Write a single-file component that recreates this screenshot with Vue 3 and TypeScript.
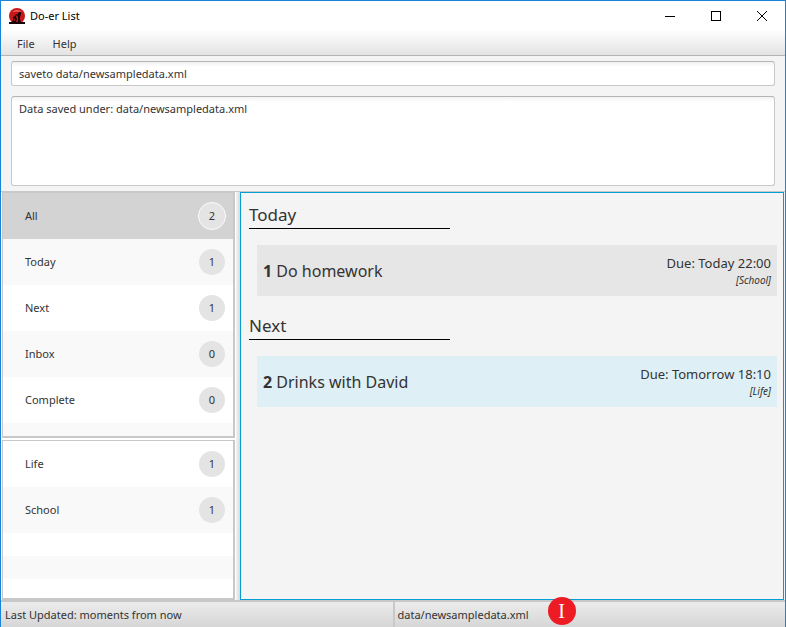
<script setup lang="ts">
import { ref } from 'vue'

interface Category {
  name: string
  count: number
}

interface Task {
  id: number
  title: string
  due: string
  tag: string
  upcoming: boolean
}

interface Section {
  title: string
  tasks: Task[]
}

const command = ref('saveto data/newsampledata.xml')
const result = ref('Data saved under: data/newsampledata.xml')
const selected = ref('All')

const builtIn: Category[] = [
  { name: 'All', count: 2 },
  { name: 'Today', count: 1 },
  { name: 'Next', count: 1 },
  { name: 'Inbox', count: 0 },
  { name: 'Complete', count: 0 },
]

const custom: Category[] = [
  { name: 'Life', count: 1 },
  { name: 'School', count: 1 },
]

const sections: Section[] = [
  {
    title: 'Today',
    tasks: [{ id: 1, title: 'Do homework', due: 'Due: Today 22:00', tag: '[School]', upcoming: false }],
  },
  {
    title: 'Next',
    tasks: [{ id: 2, title: 'Drinks with David', due: 'Due: Tomorrow 18:10', tag: '[Life]', upcoming: true }],
  },
]
</script>

<template>
  <div class="window">
    <header class="titlebar">
      <svg class="logo" viewBox="0 0 16 16" aria-hidden="true">
        <circle cx="8" cy="8" r="8" fill="#c9161b" />
        <path d="M3 4Q8 0 13 4Q8 3 3 4Z" fill="#ef6a62" />
        <path d="M0 14H3L4 12L4 9L6 8L7 6H8L7 9L8 11L7 14H9L9 9L8 7L10 4H12L12 6L11 9L11 12L12 14H16V16H0Z" fill="#170607" />
        <path d="M5 11L6 10V13H5Z" fill="#a31215" />
      </svg>
      <h1 class="title">Do-er List</h1>
      <div class="controls">
        <button type="button" aria-label="Minimize">
          <svg viewBox="0 0 10 10" shape-rendering="crispEdges"><path d="M0 5.5H10" /></svg>
        </button>
        <button type="button" aria-label="Maximize">
          <svg viewBox="0 0 10 10" shape-rendering="crispEdges"><path d="M.5 .5H9.5V9.5H.5Z" /></svg>
        </button>
        <button type="button" aria-label="Close">
          <svg viewBox="0 0 10 10"><path d="M0 0L10 10M10 0L0 10" /></svg>
        </button>
      </div>
    </header>

    <nav class="menubar">
      <button type="button">File</button>
      <button type="button">Help</button>
    </nav>

    <div class="console">
      <input v-model="command" class="field" type="text" aria-label="Command" />
      <textarea v-model="result" class="field result" readonly aria-label="Result"></textarea>
    </div>

    <div class="body">
      <aside class="sidebar">
        <ul class="list built-in">
          <li v-for="c in builtIn" :key="c.name">
            <button type="button" class="row" :class="{ selected: selected === c.name }" @click="selected = c.name">
              <span>{{ c.name }}</span>
              <span class="count">{{ c.count }}</span>
            </button>
          </li>
          <li class="filler partial"></li>
        </ul>
        <ul class="list custom">
          <li v-for="c in custom" :key="c.name">
            <button type="button" class="row" :class="{ selected: selected === c.name }" @click="selected = c.name">
              <span>{{ c.name }}</span>
              <span class="count">{{ c.count }}</span>
            </button>
          </li>
          <li class="filler"></li>
        </ul>
      </aside>

      <div class="divider"></div>

      <main class="tasks">
        <section v-for="s in sections" :key="s.title">
          <h2>{{ s.title }}</h2>
          <article v-for="t in s.tasks" :key="t.id" class="card" :class="{ upcoming: t.upcoming }">
            <p class="name"><b>{{ t.id }}</b> {{ t.title }}</p>
            <div class="meta">
              <span class="due">{{ t.due }}</span>
              <span class="tag">{{ t.tag }}</span>
            </div>
          </article>
        </section>
      </main>
    </div>

    <footer class="status">
      <span class="cell">Last Updated: moments from now</span>
      <span class="cell path">data/newsampledata.xml <b class="marker">I</b></span>
    </footer>
  </div>
</template>

<style>
body {
  margin: 0;
}
</style>

<style scoped>
* {
  box-sizing: border-box;
}

.window {
  display: flex;
  flex-direction: column;
  height: 100vh;
  border: 1px solid #1883d7;
  border-bottom: 0;
  background: #f4f4f4;
  color: #333;
  font: 11px/16px "Noto Sans", "Open Sans", sans-serif;
}

button {
  border: 0;
  padding: 0;
  background: none;
  color: inherit;
  font: inherit;
}

.titlebar {
  display: flex;
  align-items: center;
  flex: none;
  height: 30px;
  padding-left: 8px;
  background: #fff;
  color: #000;
}

.logo {
  width: 16px;
  height: 16px;
}

.title {
  margin: 0 auto 0 5px;
  font-size: 11px;
  font-weight: 400;
}

.controls {
  display: flex;
  height: 100%;
}

.controls button {
  display: grid;
  place-items: center;
  width: 46px;
}

.controls svg {
  width: 10px;
  height: 10px;
  fill: none;
  stroke: #000;
  stroke-width: 1;
}

.menubar {
  display: flex;
  flex: none;
  gap: 18px;
  height: 25px;
  padding: 2px 16px 0;
  border-bottom: 1px solid #b5b5b5;
  background: linear-gradient(#fdfdfd, #e3e3e3);
}

.console {
  display: flex;
  flex: none;
  flex-direction: column;
  gap: 10px;
  padding: 5px 10px;
}

.field {
  display: block;
  width: 100%;
  height: 25px;
  margin: 0;
  padding: 0 7px;
  border: 1px solid #c8c8c8;
  border-top-color: #b5b5b5;
  border-radius: 3px;
  outline: 0;
  background: linear-gradient(#f1f1f1, #fff 5px);
  color: #333;
  font: inherit;
}

.result {
  height: 90px;
  padding-top: 4px;
  resize: none;
}

.body {
  display: flex;
  flex: 1;
  min-height: 0;
  border-top: 1px solid #c8c8c8;
}

.sidebar {
  display: flex;
  flex-direction: column;
  flex: 0 0 235px;
  gap: 2px;
  padding: 0 1px;
  background: #fff;
}

.divider {
  flex: 0 0 4px;
  background: linear-gradient(90deg, #f4f4f4, #d9d9d9);
}

.list {
  display: flex;
  flex-direction: column;
  min-height: 0;
  margin: 0;
  padding: 0;
  overflow: hidden;
  border: solid #c8c8c8;
  border-width: 1px 2px 2px 1px;
  list-style: none;
}

.built-in {
  flex: none;
}

.custom {
  flex: 1;
}

.row {
  display: flex;
  align-items: center;
  justify-content: space-between;
  width: 100%;
  height: 46px;
  padding: 0 7px 0 22px;
  background: #fff;
}

li:nth-child(even) .row {
  background: #f9f9f9;
}

li .row.selected {
  background: #d3d3d3;
}

.count {
  width: 28px;
  border: 1px solid transparent;
  border-radius: 50%;
  background: #e4e4e4 padding-box;
  line-height: 26px;
  text-align: center;
}

.selected .count {
  border-color: #fff;
}

.filler {
  flex: 1;
  background: repeating-linear-gradient(#fff 0 23px, #f9f9f9 23px 46px);
}

.filler.partial {
  flex: 0 0 13px;
  background: #f9f9f9;
}

.tasks {
  flex: 1;
  min-width: 0;
  margin-right: 1px;
  padding: 10px 6px 0 8px;
  overflow: hidden;
  border: 1px solid #039ed3;
}

h2 {
  width: 201px;
  height: 26px;
  margin: 0 0 16px;
  border-bottom: 1px solid #000;
  font-size: 17px;
  font-weight: 400;
  line-height: 24px;
}

.card {
  display: flex;
  justify-content: space-between;
  height: 51px;
  margin: 0 0 18px 8px;
  padding: 0 6px;
  background: #e6e6e6;
}

.card.upcoming {
  background: #deeff5;
}

.name {
  margin: 0;
  font-size: 16px;
  line-height: 52px;
}

.meta {
  display: flex;
  flex-direction: column;
  padding-top: 9px;
  text-align: right;
}

.due {
  font-size: 13px;
  line-height: 18px;
}

.tag {
  font-size: 10px;
  font-style: italic;
}

.status {
  display: flex;
  flex: none;
  height: 27px;
  padding-left: 1px;
  border-top: 2px solid #c8c8c8;
  background: linear-gradient(#ececec, #d6d6d6);
}

.cell {
  display: flex;
  align-items: center;
  flex: 1;
  padding-left: 3px;
}

.path {
  border-left: 2px solid #c8c8c8;
}

.marker {
  z-index: 1;
  width: 28px;
  margin: -8px 0 0 19px;
  border-radius: 50%;
  background: #ed1c24;
  color: #fff;
  font: 20px/28px "Liberation Serif", serif;
  text-align: center;
}
</style>
